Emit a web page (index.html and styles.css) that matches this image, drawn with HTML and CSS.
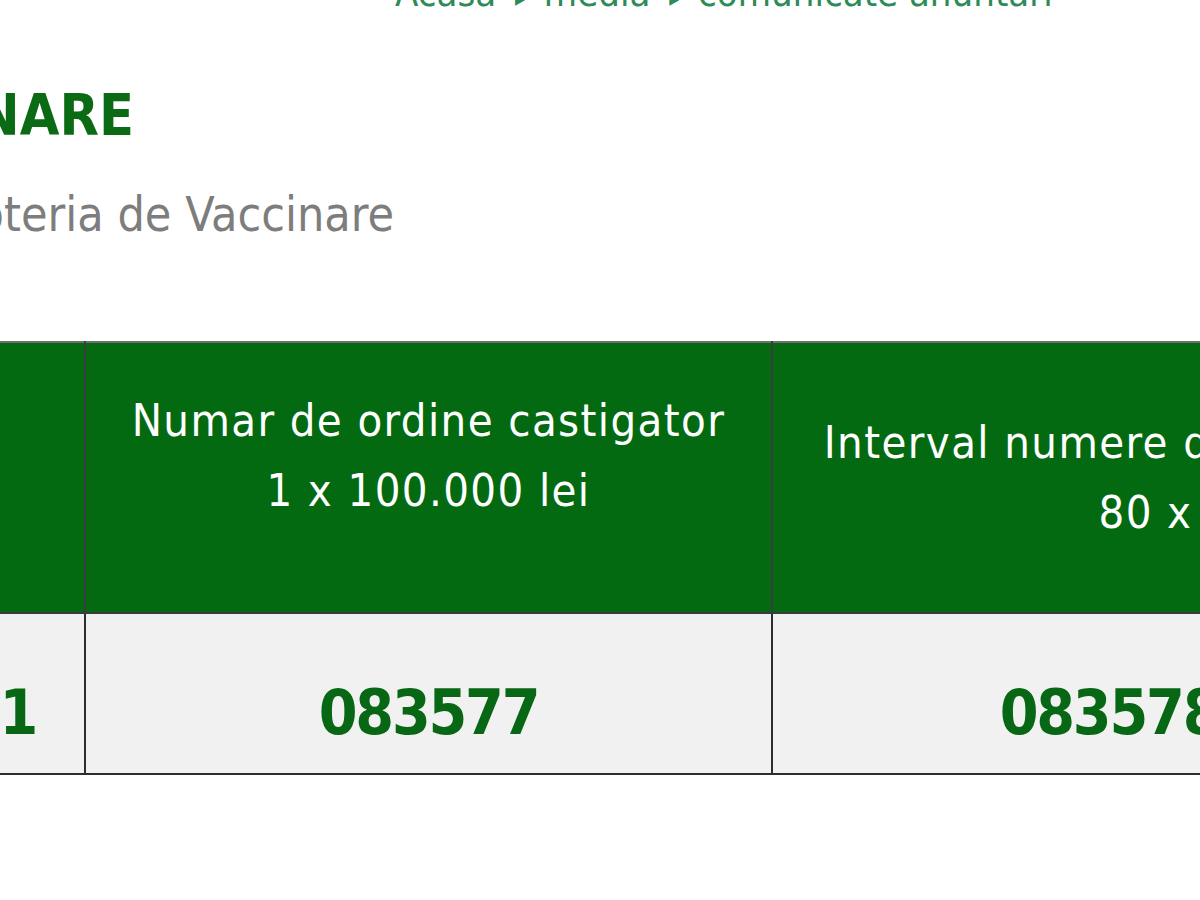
FILE: index.html
```html
<!DOCTYPE html>
<html lang="ro">
<head>
<meta charset="utf-8">
<title>Loteria de Vaccinare</title>
<link rel="stylesheet" href="styles.css">
</head>
<body>
<div class="page">
  <nav class="breadcrumb">Acasa <span class="sep">▸</span> media <span class="sep">▸</span> comunicate anuntari</nav>
  <div class="title-row"><h1 class="title">LOTERIA DE VACCINARE</h1></div>
  <div class="subtitle-row"><p class="subtitle">Rezultatele extragerii Loteria de Vaccinare</p></div>
  <table class="results">
    <colgroup>
      <col class="c1">
      <col class="c2">
      <col class="c3">
    </colgroup>
    <thead>
      <tr>
        <th>Data</th>
        <th class="raised">Numar de ordine castigator<br>1 x 100.000 lei</th>
        <th>Interval numere de ordine castigatoare<br>80 x 1.000 lei</th>
      </tr>
    </thead>
    <tbody>
      <tr>
        <td class="date">2021</td>
        <td>083577</td>
        <td>083578 - 083657</td>
      </tr>
    </tbody>
  </table>
</div>
</body>
</html>
```
FILE: styles.css
```css
html, body {
  margin: 0;
  padding: 0;
  background: #ffffff;
}
body {
  font-family: "DejaVu Sans Condensed", "DejaVu Sans", sans-serif;
  overflow: hidden;
}
.page {
  width: 1200px;
  height: 900px;
  overflow: hidden;
}
.breadcrumb {
  margin-top: -31px;
  padding-left: 395px;
  font-size: 38px;
  line-height: 48px;
  color: #2e8a57;
  white-space: nowrap;
}
.breadcrumb .sep {
  font-size: 22px;
  line-height: 0;
  vertical-align: baseline;
  padding: 0 8px;
}
.title-row {
  display: flex;
  justify-content: flex-end;
  width: 134px;
  margin-top: 70px;
  white-space: nowrap;
}
.title {
  margin: 0;
  font-size: 57px;
  line-height: 57px;
  font-weight: bold;
  color: #0b6b15;
}
.subtitle-row {
  display: flex;
  justify-content: flex-end;
  width: 394px;
  margin-top: 45px;
  white-space: nowrap;
}
.subtitle {
  margin: 0;
  font-size: 48px;
  line-height: 50px;
  color: #7d7d7d;
}
.results {
  margin-top: 102px;
  margin-left: -316px;
  border-collapse: collapse;
  table-layout: fixed;
  width: 2037px;
}
.c1 { width: 400px; }
.c2 { width: 687px; }
.c3 { width: 950px; }
.results th {
  height: 271px;
  padding: 0;
  box-sizing: border-box;
  background: #036a12;
  color: #ffffff;
  font-weight: normal;
  font-size: 45px;
  letter-spacing: 1.4px;
  line-height: 70px;
  text-align: center;
  vertical-align: middle;
  border: 2px solid #3b3b3b;
  border-top-color: #707070;
  white-space: nowrap;
}
.results th.raised {
  padding-bottom: 44px;
}
.results td {
  height: 161px;
  padding: 38px 0 0 0;
  box-sizing: border-box;
  background: #f1f1f1;
  color: #076714;
  font-weight: bold;
  font-size: 62px;
  letter-spacing: -2.2px;
  text-align: center;
  vertical-align: middle;
  border: 2px solid #2e2e2e;
  white-space: nowrap;
}
.results td.date {
  text-align: right;
  padding-right: 48px;
}
```
